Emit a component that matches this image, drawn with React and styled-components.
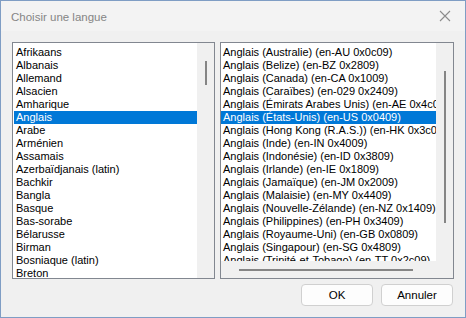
import styled, { createGlobalStyle } from "styled-components";

const LANGUAGES = [
   "Afrikaans", "Albanais", "Allemand", "Alsacien", "Amharique", "Anglais",
   "Arabe", "Arménien", "Assamais", "Azerbaïdjanais (latin)", "Bachkir",
   "Bangla", "Basque", "Bas-sorabe", "Bélarusse", "Birman",
   "Bosniaque (latin)", "Breton",
]

const VARIANTS = [
   "Anglais (Australie) (en-AU 0x0c09)",
   "Anglais (Belize) (en-BZ 0x2809)",
   "Anglais (Canada) (en-CA 0x1009)",
   "Anglais (Caraïbes) (en-029 0x2409)",
   "Anglais (Émirats Arabes Unis) (en-AE 0x4c09)",
   "Anglais (États-Unis) (en-US 0x0409)",
   "Anglais (Hong Kong (R.A.S.)) (en-HK 0x3c09)",
   "Anglais (Inde) (en-IN 0x4009)",
   "Anglais (Indonésie) (en-ID 0x3809)",
   "Anglais (Irlande) (en-IE 0x1809)",
   "Anglais (Jamaïque) (en-JM 0x2009)",
   "Anglais (Malaisie) (en-MY 0x4409)",
   "Anglais (Nouvelle-Zélande) (en-NZ 0x1409)",
   "Anglais (Philippines) (en-PH 0x3409)",
   "Anglais (Royaume-Uni) (en-GB 0x0809)",
   "Anglais (Singapour) (en-SG 0x4809)",
   "Anglais (Trinité-et-Tobago) (en-TT 0x2c09)",
]

function App() {
   return (
      <>
         <GlobalStyle />
         <Window>
            <TitleBar>
               <Title>Choisir une langue</Title>
               <CloseIcon width="12" height="12" viewBox="0 0 12 12">
                  <path d="M1 1 L11 11 M11 1 L1 11" stroke="#8c8c8c" strokeWidth="1.1" fill="none" />
               </CloseIcon>
            </TitleBar>

            <Body>
               <Lists>
                  <ListBox $width={203}>
                     <Items>
                        {LANGUAGES.map(name => (
                           <Item key={name} $selected={name === "Anglais"}>{name}</Item>
                        ))}
                     </Items>
                     <VScroll>
                        <VThumb $top={18} $height={24} />
                     </VScroll>
                  </ListBox>

                  <ListBox $width={234} $grid>
                     <Items $wide>
                        {VARIANTS.map(name => (
                           <Item key={name} $selected={name.includes("États-Unis")}>{name}</Item>
                        ))}
                     </Items>
                     <VScroll>
                        <VThumb $top={28} $height={152} />
                     </VScroll>
                     <HScroll>
                        <HThumb $left={18} $width={174} />
                     </HScroll>
                     <Corner />
                  </ListBox>
               </Lists>

               <Buttons>
                  <Button>OK</Button>
                  <Button>Annuler</Button>
               </Buttons>
            </Body>
         </Window>
      </>
   )
}


// STYLED COMPONENTS

const GlobalStyle = createGlobalStyle`
   html, body {
      margin: 0;
      padding: 0;
      background: #f0f0f0;
   }
   * {
      box-sizing: border-box;
   }
`

const Window = styled.div`
   width: 466px;
   height: 318px;
   border: solid 1px #7f9dc4;
   display: flex;
   flex-direction: column;
   font-family: "Liberation Sans", Arial, sans-serif;
   background-color: #f0f0f0;
`

const TitleBar = styled.div`
   height: 30px;
   flex: none;
   display: flex;
   align-items: center;
   justify-content: space-between;
   padding: 0 9px 0 10px;
   background-color: #f3f3f3;
`

const Title = styled.div`
   font-size: 11.5px;
   color: #858585;
   margin-top: 1px;
`

const CloseIcon = styled.svg`
   display: block;
   margin-right: 5px;
`

const Body = styled.div`
   flex: 1;
   display: flex;
   flex-direction: column;
   gap: 5px;
   padding: 11px;
`

const Lists = styled.div`
   height: 237px;
   display: flex;
   gap: 5px;
`

const ListBox = styled.div`
   width: ${p => p.$width}px;
   height: 100%;
   border: solid 1px #828790;
   background-color: #fff;
   display: ${p => (p.$grid ? "grid" : "flex")};
   grid-template-columns: 1fr 17px;
   grid-template-rows: 1fr 17px;
   overflow: hidden;
`

const Items = styled.div`
   flex: 1;
   min-width: 0;
   min-height: 0;
   overflow: hidden;
   padding: ${p => (p.$wide ? "3px 0 0 0" : "3px 0 0 1px")};
   font-size: 11px;
`

const Item = styled.div`
   height: 13px;
   line-height: 13px;
   padding-left: 2px;
   white-space: nowrap;
   overflow: hidden;
   color: ${p => (p.$selected ? "#fff" : "#000")};
   background-color: ${p => (p.$selected ? "#0078d7" : "transparent")};
`

const VScroll = styled.div`
   width: 17px;
   flex: none;
   background-color: #f0f0f0;
   display: flex;
   justify-content: center;
`

const VThumb = styled.div`
   width: 2px;
   height: ${p => p.$height}px;
   margin-top: ${p => p.$top}px;
   margin-left: 1px;
   background-color: #858585;
`

const HScroll = styled.div`
   background-color: #f0f0f0;
   display: flex;
   align-items: center;
`

const HThumb = styled.div`
   height: 2px;
   width: ${p => p.$width}px;
   margin-left: ${p => p.$left}px;
   margin-top: 1px;
   background-color: #858585;
`

const Corner = styled.div`
   background-color: #f0f0f0;
`

const Buttons = styled.div`
   display: flex;
   justify-content: flex-end;
   gap: 8px;
   padding-right: 1px;
`

const Button = styled.button`
   width: 72px;
   height: 22px;
   border: solid 1px #d0d0d0;
   border-radius: 4px;
   background-color: #fdfdfd;
   font-family: "Liberation Sans", Arial, sans-serif;
   font-size: 11.5px;
   color: #000;
   padding: 0;
`

export default App;
